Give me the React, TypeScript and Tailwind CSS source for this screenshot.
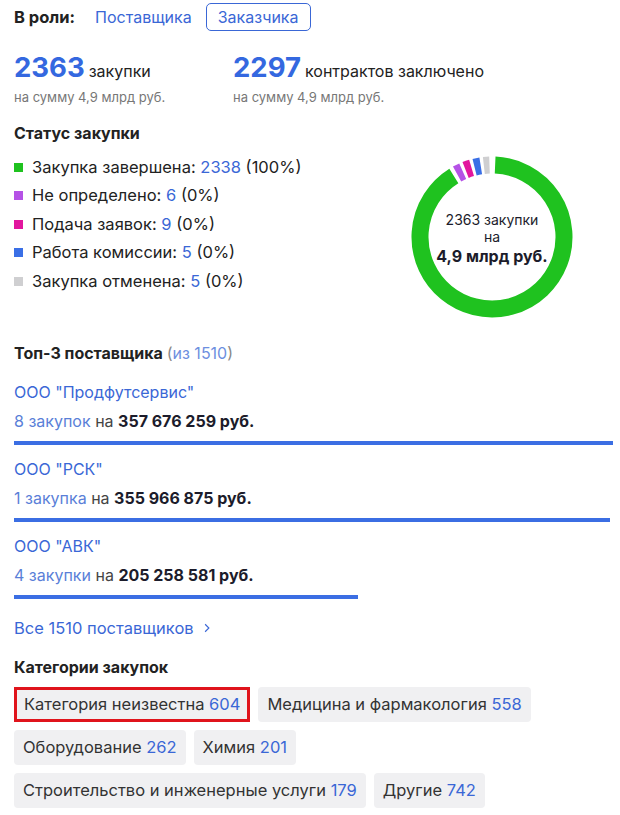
import type { ReactNode } from "react";

const blue = "text-[#3a67d6]";

type Status = { label: string; count: number; pct: string; color: string };

const statuses: Status[] = [
  { label: "Закупка завершена", count: 2338, pct: "100%", color: "#1fc21f" },
  { label: "Не определено", count: 6, pct: "0%", color: "#b552e6" },
  { label: "Подача заявок", count: 9, pct: "0%", color: "#e2169e" },
  { label: "Работа комиссии", count: 5, pct: "0%", color: "#3a6fe6" },
  { label: "Закупка отменена", count: 5, pct: "0%", color: "#cfcfd1" },
];

const suppliers = [
  { name: 'ООО "Продфутсервис"', count: "8 закупок", sum: 357676259, sumText: "357 676 259 руб." },
  { name: 'ООО "РСК"', count: "1 закупка", sum: 355966875, sumText: "355 966 875 руб." },
  { name: 'ООО "АВК"', count: "4 закупки", sum: 205258581, sumText: "205 258 581 руб." },
];

const categories = [
  { name: "Категория неизвестна", count: 604, marked: true },
  { name: "Медицина и фармакология", count: 558 },
  { name: "Оборудование", count: 262 },
  { name: "Химия", count: 201 },
  { name: "Строительство и инженерные услуги", count: 179 },
  { name: "Другие", count: 742 },
];

function polar(cx: number, cy: number, r: number, deg: number) {
  const a = ((deg - 90) * Math.PI) / 180;
  return [cx + r * Math.cos(a), cy + r * Math.sin(a)];
}

function arc(start: number, end: number) {
  const [x1, y1] = polar(81, 81, 72, start);
  const [x2, y2] = polar(81, 81, 72, end);
  const large = end - start > 180 ? 1 : 0;
  return `M ${x1} ${y1} A 72 72 0 ${large} 1 ${x2} ${y2}`;
}

// green runs clockwise from the top, the tiny statuses sit just left of 12 o'clock
const segments = [
  { from: 2.5, to: 328, color: "#1fc21f" },
  { from: 331, to: 336, color: "#b552e6" },
  { from: 338.5, to: 343.5, color: "#e2169e" },
  { from: 346, to: 351, color: "#3a6fe6" },
  { from: 353.5, to: 358, color: "#cfcfd1" },
];

function Donut() {
  return (
    <div className="relative size-[162px]">
      <svg viewBox="0 0 162 162" className="size-[162px]">
        {segments.map((s) => (
          <path key={s.color} d={arc(s.from, s.to)} fill="none" stroke={s.color} strokeWidth="17" />
        ))}
      </svg>
      <div className="absolute inset-0 flex flex-col items-center justify-center pt-[4px] text-center text-[#1c1c2b]">
        <span className="text-[14px] leading-[17px]">2363 закупки</span>
        <span className="text-[14px] leading-[17px]">на</span>
        <span className="text-[16px] leading-[23px] font-bold">4,9 млрд руб.</span>
      </div>
    </div>
  );
}

function Heading({ children, className = "" }: { children: ReactNode; className?: string }) {
  return <h3 className={`text-[16px] leading-5 font-bold text-[#222] ${className}`}>{children}</h3>;
}

export default function App() {
  const maxSum = Math.max(...suppliers.map((s) => s.sum));

  return (
    <div className="w-[620px] bg-white pr-[7px] pl-[14px] pb-[7px] font-['Inter',sans-serif] text-[16px] text-[#222]">
      <div className="flex h-[34px] items-center">
        <span className="text-[16.5px] font-bold">В роли:</span>
        <span className={`ml-[20px] ${blue}`}>Поставщика</span>
        <span className={`ml-[14px] flex h-[28px] items-center rounded-[5px] border border-[#3a67d6] px-[11px] ${blue}`}>
          Заказчика
        </span>
      </div>

      <div className="mt-[16px] flex">
        <div className="w-[219px]">
          <div className="flex items-baseline">
            <span className="text-[27.5px] leading-[34px] font-bold text-[#3468e0]">2363</span>
            <span className="ml-[4px]">закупки</span>
          </div>
          <div className="mt-[4px] text-[13px] leading-[18px] text-[#777]">на сумму 4,9 млрд руб.</div>
        </div>
        <div>
          <div className="flex items-baseline">
            <span className="text-[27.5px] leading-[34px] font-bold text-[#3468e0]">2297</span>
            <span className="ml-[4px]">контрактов заключено</span>
          </div>
          <div className="mt-[4px] text-[13px] leading-[18px] text-[#777]">на сумму 4,9 млрд руб.</div>
        </div>
      </div>

      <Heading className="mt-[17px]">Статус закупки</Heading>
      <div className="mt-[10px] flex items-start justify-between">
        <ul className="text-[16.5px]">
          {statuses.map((s) => (
            <li key={s.label} className="flex h-[28.5px] items-center">
              <span className="mr-[9px] size-[9px]" style={{ backgroundColor: s.color }} />
              <span>
                {s.label}: <span className={blue}>{s.count}</span> ({s.pct})
              </span>
            </li>
          ))}
        </ul>
        <div className="mt-[3px] mr-[40px]">
          <Donut />
        </div>
      </div>

      <Heading className="mt-[25px]">
        Топ-3 поставщика{" "}
        <span className="font-normal text-[#888]">
          (<span className="text-[#6d8fe0]">из 1510</span>)
        </span>
      </Heading>

      <div className="mt-[19px] flex flex-col gap-[14px]">
        {suppliers.map((s) => (
          <div key={s.name}>
            <div className={`leading-5 ${blue}`}>{s.name}</div>
            <div className="mt-[9px] leading-5">
              <span className="text-[#5a7fd8]">{s.count}</span> <span className="text-[#444]">на</span>{" "}
              <span className="font-bold text-[#1c1c2b]">{s.sumText}</span>
            </div>
            <div className="mt-[10px] h-[4px] bg-[#3b6ee3]" style={{ width: `${(s.sum / maxSum) * 100}%` }} />
          </div>
        ))}
      </div>

      <div className={`mt-[19px] flex items-center text-[16.5px] leading-5 ${blue}`}>
        Все 1510 поставщиков
        <svg viewBox="0 0 8 12" className="ml-[10px] h-[10px] w-[6px]" fill="none" stroke="currentColor" strokeWidth="1.5">
          <path d="M1.5 1 6.5 6l-5 5" />
        </svg>
      </div>

      <Heading className="mt-[19px]">Категории закупок</Heading>
      <div className="mt-[10px] flex flex-wrap gap-x-[8px] gap-y-[8px] text-[16.5px]">
        {categories.map((c) => (
          <span
            key={c.name}
            className={`flex h-[35px] items-center rounded-[4px] bg-[#f0f0f2] px-[9px] text-[#333] ${
              c.marked ? "rounded-none px-[10px] ring-[3px] ring-[#e0141c] ring-inset" : ""
            }`}
          >
            {c.name}&nbsp;<span className={blue}>{c.count}</span>
          </span>
        ))}
      </div>
    </div>
  );
}
